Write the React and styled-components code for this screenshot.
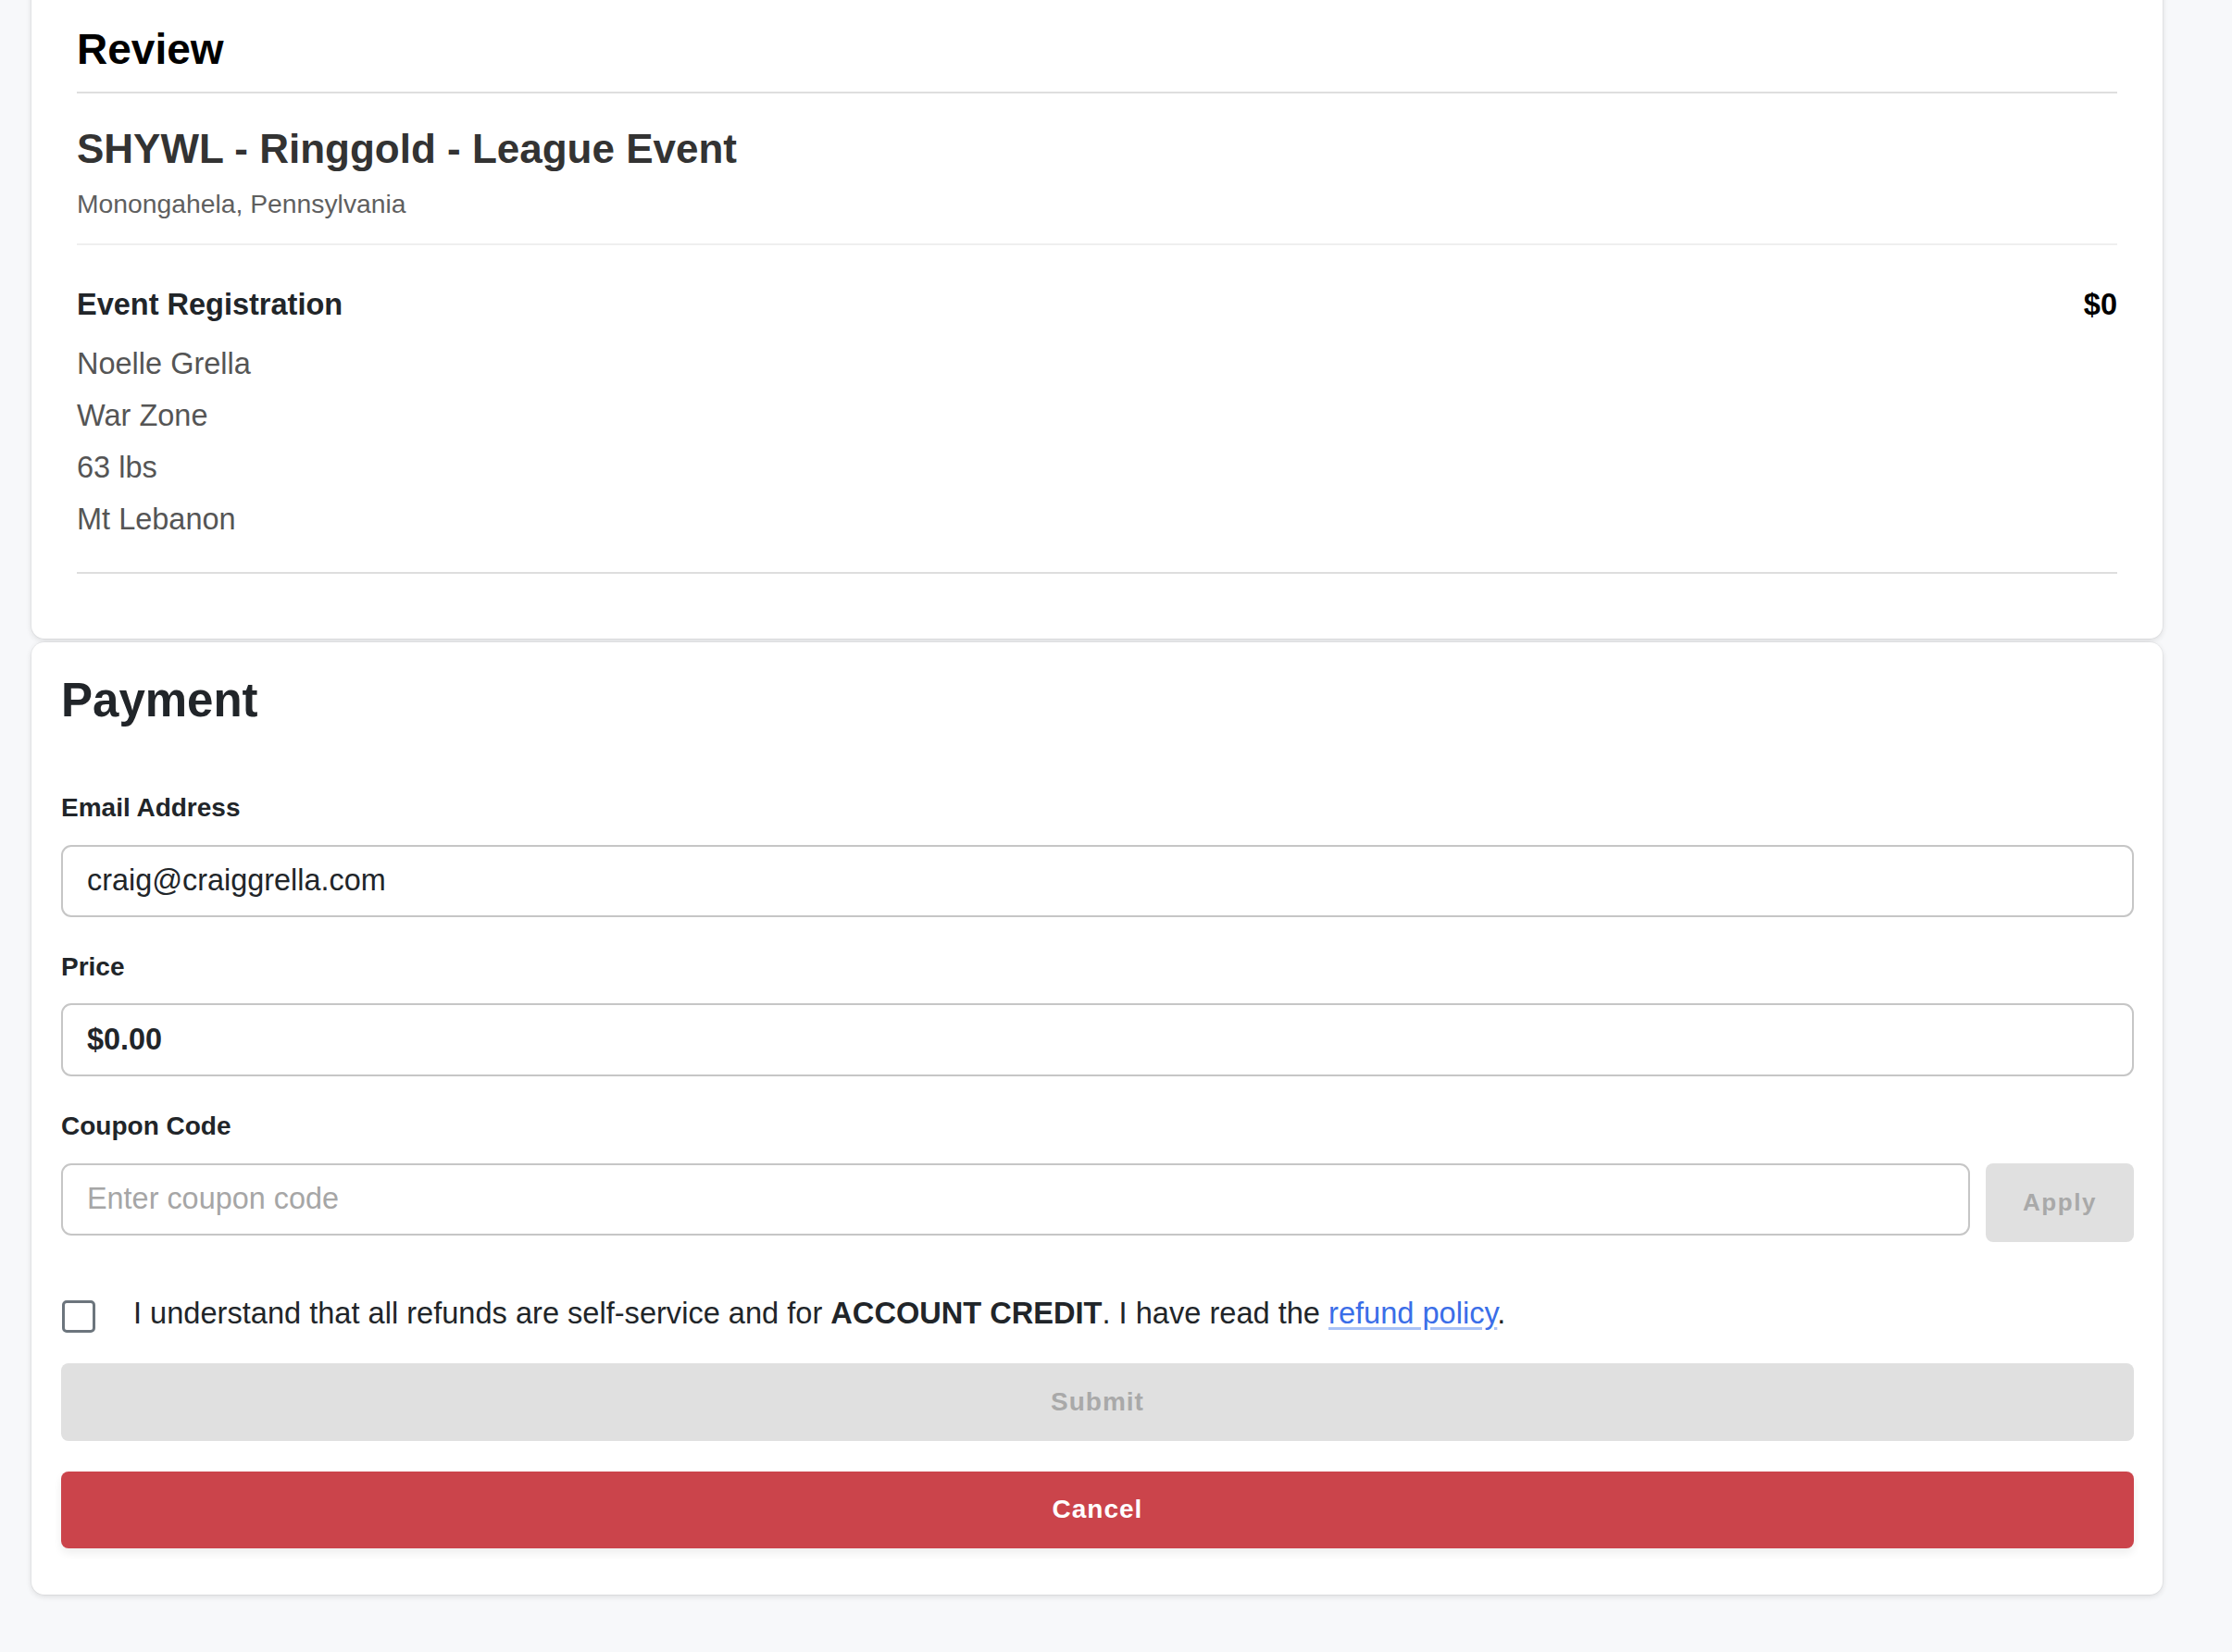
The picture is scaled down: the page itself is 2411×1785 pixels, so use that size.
import styled, { createGlobalStyle } from 'styled-components';

const GlobalStyle = createGlobalStyle`
  html, body {
    margin: 0;
    padding: 0;
    background: #f7f8fa;
    font-family: "Liberation Sans", Arial, Helvetica, sans-serif;
    color: #212529;
  }
  * { box-sizing: border-box; }
`;

const Page = styled.div`
  width: 2302px;
  margin: -20px 0 0 34px;
  padding-bottom: 64px;
  display: flex;
  flex-direction: column;
  gap: 4px;
`;

const Card = styled.section`
  background: #fff;
  border-radius: 14px;
  box-shadow: 0 0 0 1px rgba(0, 0, 0, 0.035), 0 2px 6px rgba(0, 0, 0, 0.12);
  padding: ${p => p.$pad};
`;

const ReviewTitle = styled.h2`
  margin: 0;
  font-size: 46px;
  line-height: 1.2;
  font-weight: 700;
  color: #000;
`;

const Divider = styled.hr`
  border: 0;
  height: 2px;
  background: ${p => p.$light ? '#efefef' : '#dedede'};
  margin: ${p => p.$m};
`;

const EventName = styled.h3`
  margin: 0;
  font-size: 44px;
  line-height: 1.2;
  font-weight: 700;
  color: #333;
`;

const Location = styled.div`
  margin-top: 16px;
  font-size: 28.3px;
  line-height: 1.2;
  color: #5f5f5f;
`;

const ItemHead = styled.div`
  display: flex;
  justify-content: space-between;
  font-size: 32.5px;
  line-height: 1.2;
  font-weight: 700;
  color: #212529;
`;

const Amount = styled.span`
  color: #000;
`;

const Details = styled.ul`
  list-style: none;
  margin: 16px 0 0;
  padding: 0;
`;

const Detail = styled.li`
  font-size: 32.5px;
  line-height: 56px;
  color: #555;
`;

const PaymentTitle = styled.h2`
  margin: 0 0 69px;
  font-size: 51px;
  line-height: 1.2;
  font-weight: 700;
  color: #212529;
`;

const Field = styled.div`
  display: flex;
  flex-direction: column;
  gap: 23px;
  margin-bottom: ${p => p.$last ? '0' : '37px'};
`;

const Label = styled.label`
  font-size: 28px;
  line-height: 1.2;
  font-weight: 700;
  color: #212529;
`;

const Input = styled.input`
  width: 100%;
  height: ${p => p.$h || 78}px;
  padding: 0 26px;
  border: 2px solid #c6c6c6;
  border-radius: 11px;
  background: #fff;
  font-family: "Liberation Sans", Arial, Helvetica, sans-serif;
  font-size: 32.4px;
  font-weight: ${p => p.$bold ? 700 : 400};
  color: #212529;
  outline: none;
  &::placeholder { color: #a6a6a6; }
`;

const CouponRow = styled.div`
  display: flex;
  align-items: flex-start;
  gap: 17px;
`;

const GreyButton = styled.button`
  flex: ${p => p.$wide ? '1 1 auto' : '0 0 160px'};
  width: ${p => p.$wide ? '100%' : '160px'};
  height: ${p => p.$wide ? '84px' : '85px'};
  border: 0;
  border-radius: 8px;
  background: #e0e0e0;
  color: #a9a9a9;
  font-family: "Liberation Sans", Arial, Helvetica, sans-serif;
  font-size: ${p => p.$wide ? '28px' : '26px'};
  font-weight: 700;
  letter-spacing: ${p => p.$wide ? '1px' : '1.6px'};
`;

const AgreeRow = styled.div`
  display: flex;
  align-items: flex-start;
  gap: 41px;
  margin: 53px 0 30px 1px;
`;

const Check = styled.input`
  appearance: none;
  flex: 0 0 36px;
  width: 36px;
  height: 35px;
  margin: 10px 0 0;
  border: 3px solid #6c757d;
  border-radius: 5px;
  background: #fff;
`;

const AgreeText = styled.p`
  margin: 0;
  font-size: 32.6px;
  line-height: 48px;
  color: #212529;
`;

const PolicyLink = styled.a`
  color: #3a6ee8;
  text-decoration: underline;
  text-decoration-color: #a9c1f6;
  text-underline-offset: 4px;
`;

const Actions = styled.div`
  display: flex;
  flex-direction: column;
  gap: 33px;
`;

const CancelButton = styled.button`
  width: 100%;
  height: 83px;
  border: 0;
  border-radius: 8px;
  background: #cb444b;
  color: #fff;
  font-family: "Liberation Sans", Arial, Helvetica, sans-serif;
  font-size: 28px;
  font-weight: 700;
  letter-spacing: 1px;
  box-shadow: 0 5px 10px rgba(0, 0, 0, 0.07);
`;

const details = ['Noelle Grella', 'War Zone', '63 lbs', 'Mt Lebanon'];

export default function App() {
  return (
    <>
      <GlobalStyle />
      <Page>
        <Card $pad="46px 49px 70px">
          <ReviewTitle>Review</ReviewTitle>
          <Divider $m="18px 0 34px" />
          <EventName>SHYWL - Ringgold - League Event</EventName>
          <Location>Monongahela, Pennsylvania</Location>
          <Divider $light $m="25px 0 45px" />
          <ItemHead>
            <span>Event Registration</span>
            <Amount>$0</Amount>
          </ItemHead>
          <Details>
            {details.map(d => <Detail key={d}>{d}</Detail>)}
          </Details>
          <Divider $m="29px 0 0" />
        </Card>

        <Card $pad="32px 31px 50px 32px">
          <PaymentTitle>Payment</PaymentTitle>
          <Field>
            <Label>Email Address</Label>
            <Input type="email" readOnly value="craig@craiggrella.com" />
          </Field>
          <Field>
            <Label>Price</Label>
            <Input $bold $h={79} readOnly value="$0.00" />
          </Field>
          <Field $last>
            <Label>Coupon Code</Label>
            <CouponRow>
              <Input placeholder="Enter coupon code" />
              <GreyButton disabled>Apply</GreyButton>
            </CouponRow>
          </Field>
          <AgreeRow>
            <Check type="checkbox" />
            <AgreeText>
              I understand that all refunds are self-service and for <strong>ACCOUNT CREDIT</strong>. I have read the{' '}
              <PolicyLink href="#">refund policy</PolicyLink>.
            </AgreeText>
          </AgreeRow>
          <Actions>
            <GreyButton $wide disabled>Submit</GreyButton>
            <CancelButton>Cancel</CancelButton>
          </Actions>
        </Card>
      </Page>
    </>
  );
}
